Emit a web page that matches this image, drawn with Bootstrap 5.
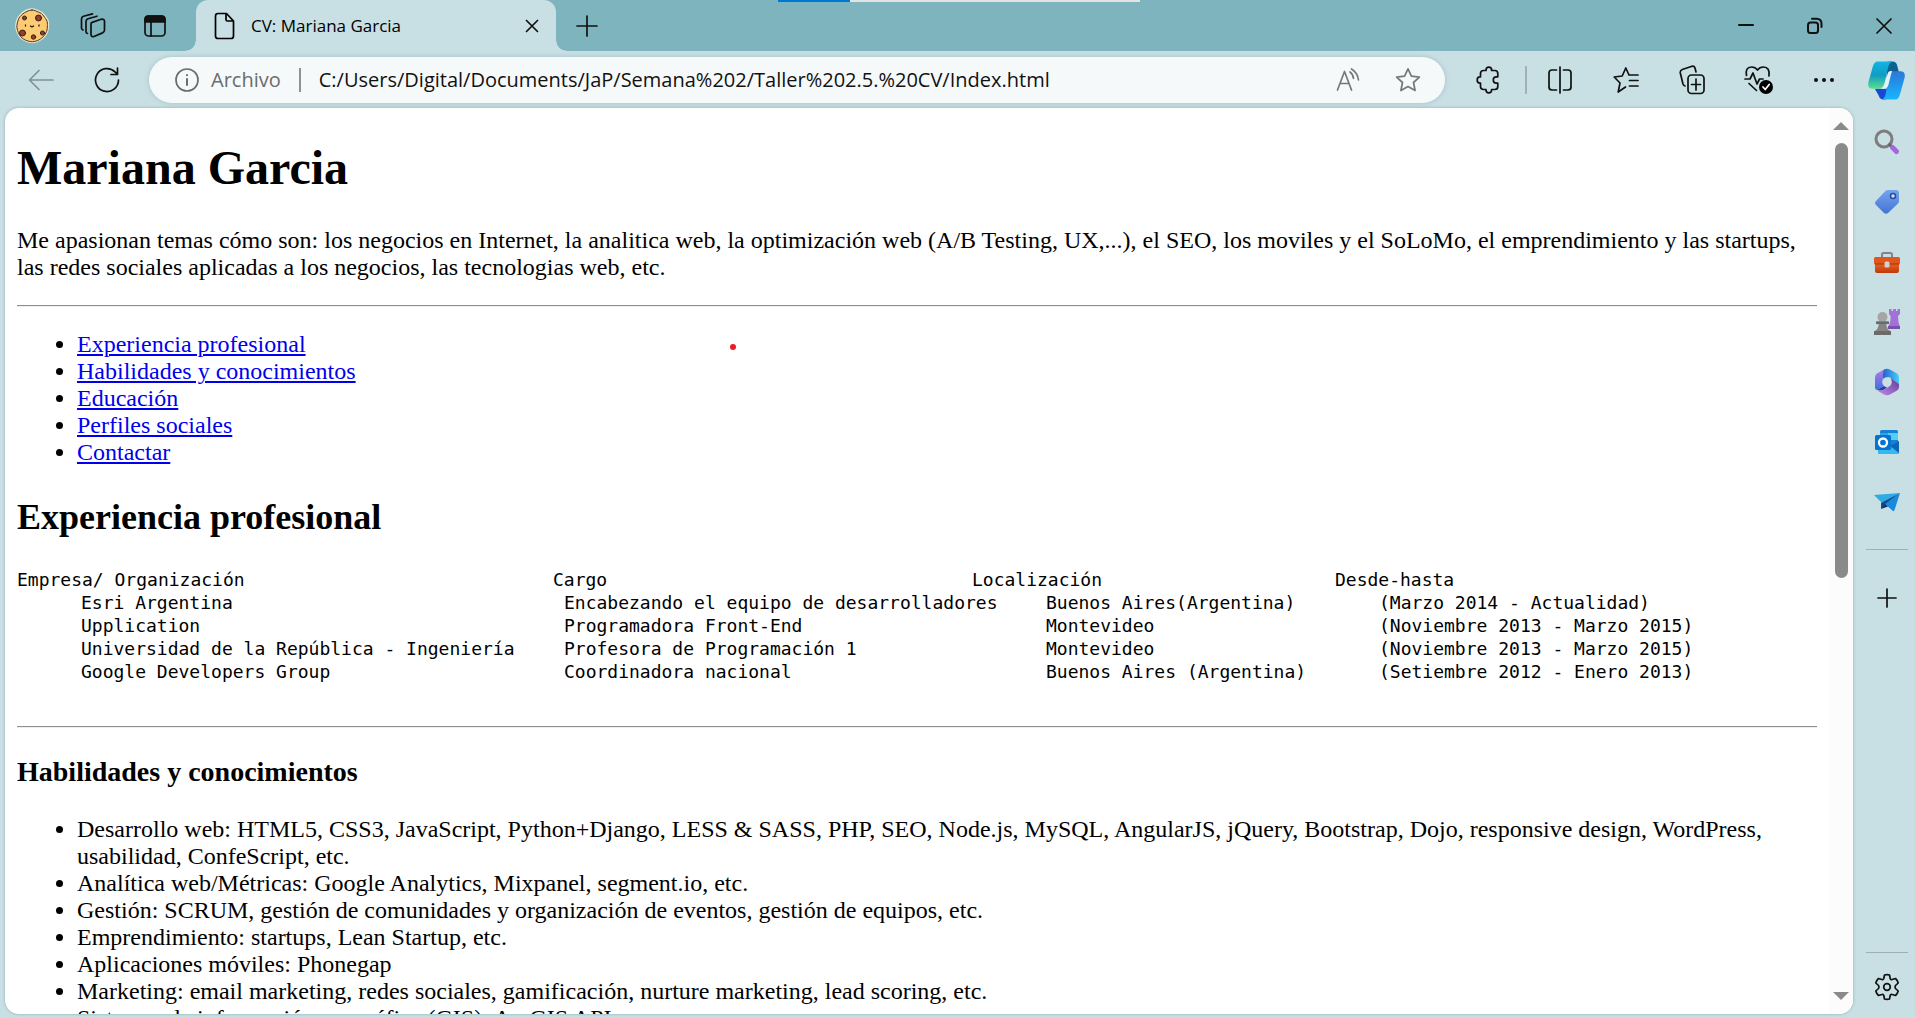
<!DOCTYPE html>
<html lang="es">
<head>
<meta charset="utf-8">
<meta name="viewport" content="width=device-width, initial-scale=1">
<title>CV: Mariana Garcia</title>
<link href="https://cdn.jsdelivr.net/npm/bootstrap@5.3.0/dist/css/bootstrap.min.css" rel="stylesheet">
<style>
  :root { --strip: #7eb4be; --chrome: #c8dfe3; }
  body { background: var(--chrome); font-family: "Open Sans", "Noto Sans", sans-serif; color: #000; }
  svg { display: block; flex: none; fill: none; stroke: currentColor; stroke-width: 1.7; stroke-linecap: round; stroke-linejoin: round; }
  .tool { border: 0; background: none; padding: 0; color: #111; display: flex; align-items: center; justify-content: center; flex: none; }

  /* tab strip */
  .tabstrip { background: var(--strip); height: 51px; }
  .tabstrip .tool { width: 62px; height: 51px; }
  .avatar { width: 36px; height: 36px; margin: 0 12px 0 14px; }
  .browser-tab { position: relative; background: var(--chrome); width: 360px; height: 51px; margin-left: 10px; padding-left: 18px; border-radius: 12px 12px 0 0; font-size: 17px; }
  .browser-tab::before, .browser-tab::after { content: ""; position: absolute; bottom: 0; width: 10px; height: 10px; }
  .browser-tab::before { left: -10px; background: radial-gradient(circle at 0 0, transparent 9px, var(--chrome) 10px); }
  .browser-tab::after { right: -10px; background: radial-gradient(circle at 100% 0, transparent 9px, var(--chrome) 10px); }
  .browser-tab .tool { width: 48px; }
  .window-buttons { gap: 7px; }
  .share-bar { position: fixed; top: 0; left: 50%; width: 362px; height: 2px; margin-left: -180px; background: #e4e4e4; }
  .share-bar span { display: block; width: 20%; height: 2px; background: #0078d7; }

  /* address row */
  .toolbar-row { height: 57px; padding-left: 8px; }
  .toolbar-row .tool { width: 66px; height: 57px; }
  .toolbar-row .tool.dim { color: #7f9296; }
  .address { background: #f6f9fa; height: 46px; border-radius: 23px; margin: 0 8px 0 9px; padding: 0 7px 0 26px; box-shadow: 0 0 5px rgba(70, 110, 120, .25); font-size: 20px; color: #6a6c6d; }
  .address .tool { width: 60px; height: 46px; color: #777; }
  .address input { border: 0; background: none; outline: 0; padding: 0; color: #111; min-width: 0; }
  .rule-v { width: 2px; height: 28px; background: #9fb1b5; flex: none; }
  .address .rule-v { margin: 0 18px; background: #8d9294; height: 24px; }
  .toolbar-row .tool.ext { width: 72px; }
  .toolbar-row .tool.pilot { width: 58px; }

  /* page window */
  .stage { min-height: 0; }
  .viewport-box { background: #fff; margin: 0 0 4px 5px; border-radius: 14px; min-height: 0; min-width: 0; box-shadow: 0 0 3px rgba(60, 110, 120, .45); }
  .cv { font-family: "Liberation Serif", serif; font-size: 24px; line-height: 27px; padding: 0 12px; min-width: 0; }
  .cv h1 { font-size: 48px; line-height: 55px; font-weight: 700; margin: 32px 0; }
  .cv h2 { font-size: 36px; line-height: 41px; font-weight: 700; margin: 31px 0 30px; }
  .cv h3 { font-size: 28px; line-height: 32px; font-weight: 700; margin: 28px 0; }
  .cv p { margin: 0 0 24px; }
  .cv hr { margin: 0; border: 0; border-top: 1px solid #8f8f8f; border-bottom: 1px solid #ededed; opacity: 1; }
  .cv ul { margin: 24px 0 30px; padding-left: 60px; }
  .cv a { color: #00e; text-underline-offset: 2px; text-decoration-thickness: 2px; }
  .jobs { table-layout: fixed; width: 100%; font-family: "DejaVu Sans Mono", monospace; font-size: 18px; line-height: 23px; margin-bottom: 43px; }
  .jobs th { font-weight: 400; }
  .jobs th, .jobs td { padding: 0; white-space: nowrap; }
  .jobs td:nth-child(1) { padding-left: 64px; }
  .jobs td:nth-child(2) { padding-left: 11px; }
  .jobs td:nth-child(3) { padding-left: 74px; }
  .jobs td:nth-child(4) { padding-left: 44px; }
  .c-org { width: 536px; } .c-job { width: 419px; } .c-loc { width: 363px; }
  .scroller { width: 24px; background: #fcfcfc; padding: 14px 0; flex: none; }
  .scroller svg { fill: #8a8a8a; stroke: none; }
  .thumb { width: 13px; height: 49.5%; margin: 13px 0 0; border-radius: 7px; background: #8a8a8a; }
  .pointer-dot { position: absolute; left: 730px; top: 344px; width: 6px; height: 6px; border-radius: 50%; background: #ed1c24; }

  /* side rail */
  .rail { width: 62px; padding: 4px 0 1px 5px; }
  .rail .tool { width: 57px; height: 60px; }
  .rail .tool svg { stroke: none; }
  .rail .tool svg.line { stroke: currentColor; }
  .rule-h { width: 42px; height: 1px; background: #9db0b4; margin: 17px 0 18px; }
  .rule-h.low { margin: auto 0 4px; }
</style>
<script src="https://cdn.jsdelivr.net/npm/bootstrap@5.3.0/dist/js/bootstrap.bundle.min.js"></script>
</head>
<body class="d-flex flex-column vh-100 overflow-hidden">

<header class="tabstrip d-flex align-items-center flex-shrink-0">
  <svg class="avatar" viewBox="0 0 36 36" role="img" aria-label="Perfil">
    <path d="M18 1.500c3 0 4 1.200 6.500 2s4 1.800 5.500 4 3 3.200 3.600 5.700.2 3.600.2 5.600-.3 4-1.400 6.200-2.200 3.400-4.200 5-3.600 2.600-6 3.300-5 .9-7.600.1-4.600-1.300-6.800-3.300-3.200-3.400-4-6-1.600-4-1.400-6.700.7-4.300 1.700-6.600 2.200-3.700 4.300-5.400S15 1.500 18 1.500z" fill="#fbc86b" stroke="#e9e5d8" stroke-width="2.500"/>
    <path d="M18 2c3 0 4 1.200 6.300 2s4 1.800 5.400 4 2.800 3.200 3.400 5.500.2 3.600.2 5.500-.3 4-1.400 6-2.200 3.400-4.100 5-3.500 2.400-5.800 3.100-4.900.9-7.400.1-4.400-1.300-6.500-3.200-3.100-3.300-3.900-5.800-1.500-4-1.300-6.500.7-4.200 1.600-6.400 2.200-3.600 4.200-5.300S15 2 18 2z" fill="#fdcc72" stroke="#54331c" stroke-width="1"/>
    <g fill="#943e2d" stroke="#38201a" stroke-width="1"><circle cx="10.500" cy="10" r="2"/><circle cx="24.500" cy="10" r="3"/><circle cx="8.500" cy="25" r="3"/><circle cx="28.500" cy="25" r="2.100"/><circle cx="19.500" cy="29" r="2.200"/></g>
    <path d="M11.500 17v1M25 17v1M16.500 18q1.500 1.500 3 0" stroke="#222" stroke-width="1.300"/>
  </svg>
  <button class="tool" aria-label="Áreas de trabajo"><svg width="26" height="26" viewBox="0 0 26 26"><path d="M11.500 9.600l9.500-3.300q3.500-.8 3.500 2V17q0 2-2 2.900L14 23.500q-3 .8-3-2V11q0-1 .5-1.400zM7.500 20.500q-1.500-.2-1.500-2V8.500q0-2 2-2.700L17 3.200M3 17q-1.500-.5-1.500-2V6q0-2 2-2.700L12.500.9"/></svg></button>
  <button class="tool" aria-label="Acciones de pestaña"><svg width="24" height="24" viewBox="0 0 24 24"><rect x="2" y="2" width="20" height="20" rx="3.500"/><path d="M2 8V5.500Q2 2 5.500 2h13Q22 2 22 5.500V8z" fill="currentColor"/><path d="M8 8v14"/></svg></button>
  <div class="browser-tab d-flex align-items-center">
    <svg width="21" height="28" viewBox="0 0 21 28"><path d="M4 1.500h8.500L19.500 9v15q0 2.500-2.500 2.500H4Q1.500 26.500 1.500 24V4Q1.500 1.500 4 1.500zM12 2v5.500Q12 9 13.500 9h5.500"/></svg>
    <span class="ms-3">CV: Mariana Garcia</span>
    <button class="tool ms-auto" aria-label="Cerrar pestaña"><svg width="14" height="14" viewBox="0 0 14 14"><path d="M1.500 1.500l11 11M12.500 1.500l-11 11"/></svg></button>
  </div>
  <button class="tool" aria-label="Nueva pestaña"><svg width="22" height="22" viewBox="0 0 22 22"><path d="M11 1v20M1 11h20"/></svg></button>
  <div class="window-buttons d-flex ms-auto">
    <button class="tool" aria-label="Minimizar"><svg width="16" height="16" viewBox="0 0 16 16"><path d="M1 7h14" stroke-width="2"/></svg></button>
    <button class="tool" aria-label="Restaurar"><svg width="16" height="18" viewBox="0 0 16 18"><rect x="1" y="5.500" width="10" height="10.500" rx="2.500" stroke-width="2"/><path d="M5 1.800h4.500q5 0 5 5V10" stroke-width="2"/></svg></button>
    <button class="tool" aria-label="Cerrar"><svg width="16" height="16" viewBox="0 0 16 16"><path d="M1 1l14 14M15 1L1 15"/></svg></button>
  </div>
</header>
<div class="share-bar"><span></span></div>

<nav class="toolbar-row d-flex align-items-center flex-shrink-0" aria-label="Navegador">
  <button class="tool dim" aria-label="Atrás"><svg width="26" height="22" viewBox="0 0 26 22"><path d="M25 11H1.500M11 1.500L1.500 11l9.500 9.500"/></svg></button>
  <button class="tool" aria-label="Actualizar"><svg width="26" height="26" viewBox="0 0 26 26"><path d="M24.500 13A11.500 11.500 0 1 1 21 4.800L23.500 7M23.500 1.200V7.500H17"/></svg></button>
  <div class="address d-flex align-items-center flex-grow-1">
    <svg width="24" height="24" viewBox="0 0 24 24"><circle cx="12" cy="12" r="11"/><path d="M12 11v6M12 7v.3" stroke-width="2"/></svg>
    <label for="url" class="ms-2 ps-1">Archivo</label>
    <span class="rule-v"></span>
    <input id="url" class="flex-grow-1" type="text" value="C:/Users/Digital/Documents/JaP/Semana%202/Taller%202.5.%20CV/Index.html">
    <button class="tool" aria-label="Leer en voz alta"><svg width="24" height="24" viewBox="0 0 24 24"><path d="M1.500 22L8.500 3.500l7 18.500M4 15.500h9M14 4q3 2 3.500 6.500M15.500 1q6 3.500 7 11"/></svg></button>
    <button class="tool" aria-label="Favorito"><svg width="26" height="26" viewBox="0 0 26 26"><path d="M13 1.800l3.400 7.300 8 1-5.900 5.400 1.600 8L13 19.600l-7.100 3.900 1.600-8L1.600 10.100l8-1z"/></svg></button>
  </div>
  <button class="tool ext" aria-label="Extensiones"><svg width="26" height="28" viewBox="0 0 26 28"><path d="M7.500 4.500H10V4q0-2.800 2.800-2.800T15.600 4v.5h3.200q3 0 3 3v3.300h-1.500q-3 0-3 3.200t3 3.200h1.500v3.300q0 3-3 3h-3.200v.5q0 2.800-2.800 2.800T10 24v-.5H7.500q-3 0-3-3v-3.300H4q-2.800 0-2.800-3.200T4 10.800h.5V7.500q0-3 3-3z"/></svg></button>
  <span class="rule-v"></span>
  <button class="tool" aria-label="Pantalla dividida"><svg width="26" height="28" viewBox="0 0 26 28"><path d="M9.500 4H5Q2 4 2 7v14q0 3 3 3h4.500M16.500 4H21q3 0 3 3v14q0 3-3 3h-4.500M13 1v26"/></svg></button>
  <button class="tool" aria-label="Favoritos"><svg width="26" height="28" viewBox="0 0 26 28"><path d="M12.500 21l-7.300 5 1.800-9L1.200 11l8-1L12.800 2 16 9M16.500 9h8.500M16.500 14.500h8.500M16.500 20h8.500"/></svg></button>
  <button class="tool" aria-label="Colecciones"><svg width="26" height="30" viewBox="0 0 26 30"><rect x="9" y="10" width="16" height="18.500" rx="3.500"/><path d="M17 14v11M12.500 19.500h9M6 21q-1.500-.5-2-2L1.300 8q-.5-2.500 2-3.500L13 1.300q2.300-.5 3 1.700l1 4"/></svg></button>
  <button class="tool" aria-label="Funciones esenciales"><svg width="30" height="30" viewBox="0 0 30 30"><path d="M3.500 10.500Q2 2 8.500 2q4 0 6 3 2-3 6-3 6.500 0 5.500 9M2 14h5l3-6 4 11 2.500-5H20M6 18.500l7.500 7"/><circle cx="23" cy="22" r="7" fill="#000" stroke="none"/><path d="M20 22l2.200 2.500 4-5" stroke="#fff"/></svg></button>
  <button class="tool" aria-label="Más"><svg width="24" height="6" viewBox="0 0 24 6"><g fill="currentColor" stroke="none"><circle cx="4" cy="3" r="2"/><circle cx="12" cy="3" r="2"/><circle cx="20" cy="3" r="2"/></g></svg></button>
  <button class="tool pilot" aria-label="Copilot"><svg width="37" height="40" viewBox="0 0 38 40">
    <defs>
      <linearGradient id="ca" x1="0" y1="0" x2="0" y2="1"><stop offset="0" stop-color="#12b5e8"/><stop offset=".5" stop-color="#109cc4"/><stop offset="1" stop-color="#57e08a"/></linearGradient>
      <linearGradient id="cb" x1="0" y1="0" x2="0" y2="1"><stop offset="0" stop-color="#2a78d8"/><stop offset="1" stop-color="#18b5ff"/></linearGradient>
    </defs>
    <g stroke="none"><path d="M20 1h5q4 0 5 4l2 8-13 4z" fill="#0b6290"/><path d="M7 29h13l-2 11h-2q-4 0-5-4z" fill="#1a48d4"/><path d="M10 1h15q-3 1-4 5l-4 17q-2 6-7 6H5q-6 0-4.500-7L5 6q1.500-5 5-5z" fill="url(#ca)"/><path d="M26 11h7q6 0 4.500 7L33 34q-1.500 6-5 6H14q3-1 4-5l3-18q1-6 5-6z" fill="url(#cb)"/><path d="M25 11q-4-1-5 3l-3 10q-1 4-4 5h3q4 0 5-4l2-8q1-5 2-6z" fill="#e2f3f8"/></g></svg></button>
</nav>

<div class="stage d-flex flex-grow-1">
  <div class="viewport-box d-flex flex-grow-1 overflow-hidden">
    <main class="cv flex-grow-1">
      <h1>Mariana Garcia</h1>
      <p>Me apasionan temas cómo son: los negocios en Internet, la analitica web, la optimización web (A/B Testing, UX,...), el SEO, los moviles y el SoLoMo, el emprendimiento y las startups, las redes sociales aplicadas a los negocios, las tecnologias web, etc.</p>
      <hr>
      <ul>
        <li><a href="#experiencia">Experiencia profesional</a></li>
        <li><a href="#habilidades">Habilidades y conocimientos</a></li>
        <li><a href="#educacion">Educación</a></li>
        <li><a href="#perfiles">Perfiles sociales</a></li>
        <li><a href="#contactar">Contactar</a></li>
      </ul>
      <h2 id="experiencia">Experiencia profesional</h2>
      <table class="jobs">
        <colgroup><col class="c-org"><col class="c-job"><col class="c-loc"><col></colgroup>
        <thead><tr><th>Empresa/ Organización</th><th>Cargo</th><th>Localización</th><th>Desde-hasta</th></tr></thead>
        <tbody>
          <tr><td>Esri Argentina</td><td>Encabezando el equipo de desarrolladores</td><td>Buenos Aires(Argentina)</td><td>(Marzo 2014 - Actualidad)</td></tr>
          <tr><td>Upplication</td><td>Programadora Front-End</td><td>Montevideo</td><td>(Noviembre 2013 - Marzo 2015)</td></tr>
          <tr><td>Universidad de la República - Ingeniería</td><td>Profesora de Programación 1</td><td>Montevideo</td><td>(Noviembre 2013 - Marzo 2015)</td></tr>
          <tr><td>Google Developers Group</td><td>Coordinadora nacional</td><td>Buenos Aires (Argentina)</td><td>(Setiembre 2012 - Enero 2013)</td></tr>
        </tbody>
      </table>
      <hr>
      <h3 id="habilidades">Habilidades y conocimientos</h3>
      <ul>
        <li>Desarrollo web: HTML5, CSS3, JavaScript, Python+Django, LESS &amp; SASS, PHP, SEO, Node.js, MySQL, AngularJS, jQuery, Bootstrap, Dojo, responsive design, WordPress, usabilidad, ConfeScript, etc.</li>
        <li>Analítica web/Métricas: Google Analytics, Mixpanel, segment.io, etc.</li>
        <li>Gestión: SCRUM, gestión de comunidades y organización de eventos, gestión de equipos, etc.</li>
        <li>Emprendimiento: startups, Lean Startup, etc.</li>
        <li>Aplicaciones móviles: Phonegap</li>
        <li>Marketing: email marketing, redes sociales, gamificación, nurture marketing, lead scoring, etc.</li>
        <li>Sistemas de información geográfica (GIS): ArcGIS API</li>
      </ul>
    </main>
    <div class="scroller d-flex flex-column align-items-center" aria-hidden="true">
      <svg width="16" height="8" viewBox="0 0 16 8"><path d="M8 0l8 8H0z"/></svg>
      <div class="thumb"></div>
      <svg class="mt-auto" width="16" height="8" viewBox="0 0 16 8"><path d="M8 8L0 0h16z"/></svg>
    </div>
  </div>

  <aside class="rail d-flex flex-column align-items-center flex-shrink-0">
    <button class="tool" aria-label="Buscar"><svg width="28" height="28" viewBox="0 0 28 28"><circle cx="11" cy="11" r="8" stroke="#7d7d7d" stroke-width="3"/><path d="M16.500 16.500l2.500 2.500" stroke="#666" stroke-width="3"/><path d="M19.500 19.500l4 4" stroke="#a267d8" stroke-width="5"/></svg></button>
    <button class="tool" aria-label="Compras"><svg width="26" height="26" viewBox="0 0 26 26"><defs><linearGradient id="tg" x1="0" y1="0" x2="0" y2="1"><stop offset="0" stop-color="#74a5ee"/><stop offset="1" stop-color="#4573d3"/></linearGradient></defs><path d="M13.500 1H22q3 0 3 3v8q0 1.500-1 2.500L14 24q-2 1.500-4 0L2 16q-2-2 0-4L11.500 2q1-1 2-1z" fill="url(#tg)"/><circle cx="19" cy="7" r="2.500" fill="#cfe0ff" stroke="#274d9b" stroke-width="1.600"/></svg></button>
    <button class="tool" aria-label="Herramientas"><svg width="28" height="24" viewBox="0 0 28 24"><defs><linearGradient id="bx" x1="0" y1="0" x2="0" y2="1"><stop offset="0" stop-color="#ed6b2c"/><stop offset="1" stop-color="#c03808"/></linearGradient></defs><path d="M9 8V4.500Q9 3 10.500 3h7Q19 3 19 4.500V8" stroke="#808585" stroke-width="2"/><path d="M2 12h24v9q0 2-2 2H4q-2 0-2-2z" fill="url(#bx)"/><rect x="1" y="7" width="26" height="7" rx="1.500" fill="#e0561c"/><path d="M2 14h24" stroke="#a83205" stroke-width="1"/><rect x="11.500" y="11.500" width="5" height="6" rx="1.500" fill="#d2d2d2"/></svg></button>
    <button class="tool" aria-label="Juegos"><svg width="28" height="28" viewBox="0 0 28 28"><path d="M16 1h2.500v2H20V1h3v2h1.500V1H27v5l-2 2q0 6 2 11v2H15v-2q3-5 2.500-11L16 6z" fill="#a472d6"/><path d="M15 18h12v3H15z" fill="#7950ae"/><circle cx="9.500" cy="9" r="5" fill="#a5a5a5"/><path d="M3.500 13h12q1.500 1.500-1 3l-1.500.5L15 21.500q3 1 3 5.500H1q0-4.500 3-5.500l2-5-2-.5q-2-1.500-.5-3z" fill="#858585"/><path d="M3 14h13v2H3zM1 23h17v4H1z" fill="#6b6b6b"/></svg></button>
    <button class="tool" aria-label="Microsoft 365"><svg width="26" height="28" viewBox="0 0 26 28"><defs><linearGradient id="ma" x1="0" y1="0" x2="0" y2="1"><stop offset="0" stop-color="#b07be6"/><stop offset="1" stop-color="#3f6fdc"/></linearGradient><linearGradient id="mb" x1="0" y1="0" x2="1" y2="0"><stop offset="0" stop-color="#2560cf"/><stop offset="1" stop-color="#43d0fa"/></linearGradient><linearGradient id="mc" x1="0" y1="1" x2="1" y2="0"><stop offset="0" stop-color="#c48af0"/><stop offset="1" stop-color="#5f3c94"/></linearGradient></defs><path d="M10 1.500L3 5.500Q1 7 1 9.500v10q0 2 2 2.500l7-4V9z" fill="url(#ma)"/><path d="M10 1.500q3-1.500 6 0l7 4q2 1.500 2 4V16l-8-6q-4-2-7.500 2-1.500-6 .5-10.500z" fill="url(#mb)"/><path d="M17 10l8 6v3q0 2-2 3.500l-7 4q-3 1.500-6 0l-7-4q6 1 9-2 6-3 5-10.500z" fill="url(#mc)"/><path d="M3 22l7-4 3 1.500Q9 23.500 3 22z" fill="#2a3fa5"/><circle cx="13" cy="14" r="4.800" fill="#c8dfe3"/></svg></button>
    <button class="tool" aria-label="Outlook"><svg width="26" height="26" viewBox="0 0 26 26"><rect x="6" y="1" width="18" height="20" rx="1.500" fill="#1681d5"/><path d="M14 4h10v7H14z" fill="#50d0f5"/><path d="M6 4h8v8H6z" fill="#28a8ea"/><path d="M4 14l13 3 8-5v12q0 1-1 1H5q-1 0-1-1z" fill="#32b9ef"/><path d="M16 17l9-5v12z" fill="#0f65b5"/><rect x="1" y="6" width="16" height="15" rx="1.500" fill="#0873ce"/><circle cx="9" cy="13.500" r="4" stroke="#fff" stroke-width="2.300"/></svg></button>
    <button class="tool" aria-label="Drop"><svg width="28" height="22" viewBox="0 0 28 22"><path d="M1 4L27 2 9 12z" fill="#2cabe5"/><path d="M27 2L8 12v6l4-4z" fill="#124a8b"/><path d="M27 2L12 13l8 7q1 .5 1.500-1z" fill="#1989dd"/><path d="M8 18l4-5 3 2.500z" fill="#0a3267"/></svg></button>
    <span class="rule-h"></span>
    <button class="tool" aria-label="Personalizar"><svg class="line" width="20" height="20" viewBox="0 0 20 20"><path d="M10 1v18M1 10h18"/></svg></button>
    <span class="rule-h low"></span>
    <button class="tool" aria-label="Configuración"><svg class="line" width="26" height="28" viewBox="0 0 26 28"><path d="M10.500 2q2.500-.8 5 0l.7 3.500q.5 1.500 2 1L21.500 5.500q2 1.800 2.700 4.500L21.500 12.500q-1 1.500 0 3l2.700 2.500q-.7 2.700-2.700 4.500l-3.300-1q-1.500-.5-2 1L15.500 26q-2.500.8-5 0l-.7-3.500q-.5-1.500-2-1l-3.300 1Q2.500 20.700 1.800 18l2.700-2.500q1-1.500 0-3L1.800 10Q2.500 7.300 4.500 5.500l3.300 1q1.500.5 2-1z"/><circle cx="13" cy="14" r="3.300"/></svg></button>
  </aside>
</div>
<span class="pointer-dot"></span>
</body>
</html>
